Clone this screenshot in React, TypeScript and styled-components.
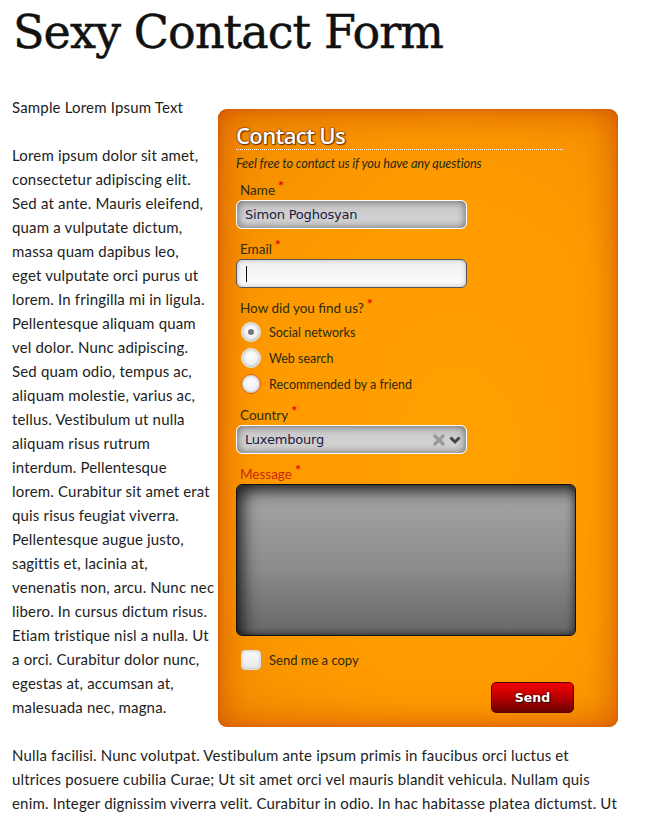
import React from "react";
import styled, { createGlobalStyle } from "styled-components";

const Global = createGlobalStyle`
  html, body { margin: 0; padding: 0; background: #fff; }
  body { font-family: Lato, "Noto Sans", sans-serif; color: #222; }
`;

const Page = styled.div`
  padding: 0 27px 0 12px;
  width: 606px;
`;

const Title = styled.h1`
  font-family: "DejaVu Serif", serif;
  font-weight: 400;
  font-size: 46px;
  line-height: 60px;
  margin: 2px 0 33px 1px;
  color: #111;
  letter-spacing: -0.9px;
  -webkit-text-stroke: 0.5px #111;
`;

const TopRow = styled.div`
  display: grid;
  grid-template-columns: 206px 400px;
  align-items: start;
`;

const Para = styled.p<{ $gap?: number }>`
  font-size: 15px;
  line-height: 24px;
  letter-spacing: 0.17px;
  margin: ${(p) => p.$gap ?? 0}px 0 0 0;
`;

const Line = styled.span`
  display: block;
  white-space: nowrap;
`;

const Panel = styled.form`
  margin-top: 14px;
  height: 618px;
  box-sizing: border-box;
  border-radius: 9px;
  background: radial-gradient(ellipse at 60% 55%, #ffa000 0%, #ff9b00 55%, #f08a00 100%);
  box-shadow: inset 0 0 36px rgba(205, 75, 0, 0.85), inset 0 0 6px rgba(200, 70, 0, 0.6);
  padding: 13px 0 0 18px;
  display: flex;
  flex-direction: column;
  font-family: Lato, "Noto Sans", sans-serif;
`;

const Header = styled.div`
  width: 327px;
  padding-bottom: 2px;
  background-image: repeating-linear-gradient(90deg, #fff 0 1px, transparent 1px 2px);
  background-size: 100% 1px;
  background-repeat: no-repeat;
  background-position: left bottom;
`;

const HeadTitle = styled.div`
  font-family: "Open Sans", sans-serif;
  font-weight: 600;
  font-size: 22px;
  line-height: 26px;
  color: #fff;
  letter-spacing: -0.6px;
  text-shadow: 0 0 2px rgba(80, 25, 0, 1), 0 0 1px rgba(60, 20, 0, 0.9), 1px 1px 1px rgba(60, 20, 0, 0.7);
`;

const Sub = styled.div`
  font-size: 12.8px;
  font-style: italic;
  line-height: 14px;
  margin-top: 6px;
  color: #2a2a10;
  letter-spacing: -0.15px;
`;

const Label = styled.label<{ $gap: number; $red?: boolean }>`
  display: block;
  font-size: 13.5px;
  line-height: 18px;
  padding-left: 4px;
  margin-top: ${(p) => p.$gap}px;
  color: ${(p) => (p.$red ? "#c62a0a" : "#2c2c10")};
`;

const Star = styled.sup`
  color: #e8001a;
  font-size: 14px;
  font-weight: 700;
  margin-left: 3px;
  vertical-align: 4px;
  line-height: 0;
`;

const GreyBox = styled.div`
  width: 231px;
  height: 29px;
  box-sizing: border-box;
  border: 1px solid #fff;
  border-radius: 6px;
  background: linear-gradient(#c8c8c8, #d6d6d6);
  box-shadow: inset 0 0 9px rgba(0, 0, 0, 0.55);
  display: flex;
  align-items: center;
  padding: 0 8px;
  margin-top: 1px;
  font-family: "DejaVu Sans", sans-serif;
  font-size: 13px;
  letter-spacing: -0.2px;
  color: #1a1a40;
`;

const WhiteBox = styled.div`
  width: 231px;
  height: 29px;
  box-sizing: border-box;
  border: 1px solid #555;
  border-radius: 6px;
  background: linear-gradient(#f0f0f0, #fbfbfb);
  box-shadow: inset 0 0 5px rgba(0, 0, 0, 0.25);
  display: flex;
  align-items: center;
  padding: 0 9px;
  margin-top: 1px;
`;

const Caret = styled.span`
  width: 1px;
  height: 16px;
  background: #111;
`;

const SelectText = styled.span`
  flex: 1;
`;

const RadioList = styled.div`
  margin-top: 2px;
  display: flex;
  flex-direction: column;
`;

const RadioRow = styled.div`
  height: 26px;
  display: flex;
  align-items: center;
  gap: 8px;
  padding-left: 5px;
  font-size: 12.5px;
  color: #2a2a10;
`;

const Radio = styled.span<{ $checked?: boolean; $focus?: boolean }>`
  width: 20px;
  height: 20px;
  box-sizing: border-box;
  border-radius: 50%;
  background: radial-gradient(circle at 50% 40%, #ffffff 0%, #eeeeee 60%, #d8d8d8 100%);
  border: ${(p) => (p.$focus ? "1.5px solid #ee5a10" : "1px solid #e6e6e6")};
  box-shadow: inset 0 0 3px rgba(0, 0, 0, 0.3);
  display: flex;
  align-items: center;
  justify-content: center;
  &::after {
    content: "";
    width: 6px;
    height: 6px;
    border-radius: 50%;
    background: ${(p) => (p.$checked ? "#777" : "transparent")};
  }
`;

const TextArea = styled.div`
  margin-top: 1px;
  width: 340px;
  height: 152px;
  box-sizing: border-box;
  border: 1px solid #111;
  border-radius: 6px;
  background: linear-gradient(#a2a2a2 10%, #8c8c8c 55%, #666 100%);
  box-shadow: inset 12px 12px 16px -6px rgba(0, 0, 0, 0.75), inset -4px 0 8px -2px rgba(0, 0, 0, 0.45),
    inset 0 -3px 6px -2px rgba(0, 0, 0, 0.4);
`;

const CheckRow = styled.div`
  margin-top: 14px;
  height: 20px;
  display: flex;
  align-items: center;
  gap: 8px;
  padding-left: 5px;
  font-size: 13px;
  color: #2a2a10;
`;

const Check = styled.span`
  width: 20px;
  height: 20px;
  box-sizing: border-box;
  border-radius: 4px;
  border: 1px solid #ddd;
  background: linear-gradient(#fafafa, #e9e9e9);
  box-shadow: inset 0 0 3px rgba(0, 0, 0, 0.2);
`;

const ButtonRow = styled.div`
  margin-top: 12px;
  width: 338px;
  display: flex;
  justify-content: flex-end;
`;

const SendButton = styled.button`
  width: 83px;
  height: 31px;
  border-radius: 5px;
  border: 1px solid #5a0000;
  background: linear-gradient(#f20000, #c00000 45%, #6a0000);
  color: #fff;
  font-family: "DejaVu Sans", sans-serif;
  font-weight: 700;
  font-size: 12.5px;
  text-shadow: 0 0 2px #300, 1px 1px 1px #300;
  padding: 0;
  cursor: pointer;
`;

const Icons = styled.span`
  display: flex;
  align-items: center;
  gap: 4px;
  margin-right: -3px;
`;

const ClearIcon = () => (
  <svg width="12" height="12" viewBox="0 0 12 12">
    <path d="M2 2 L10 10 M10 2 L2 10" stroke="#9a9a9a" strokeWidth="3.2" strokeLinecap="square" />
  </svg>
);

const ChevronIcon = () => (
  <svg width="12" height="10" viewBox="0 0 12 10">
    <path d="M1.5 2.5 L6 7 L10.5 2.5" stroke="#444" strokeWidth="3" fill="none" />
  </svg>
);

const leftLines = [
  "Lorem ipsum dolor sit amet,",
  "consectetur adipiscing elit.",
  "Sed at ante. Mauris eleifend,",
  "quam a vulputate dictum,",
  "massa quam dapibus leo,",
  "eget vulputate orci purus ut",
  "lorem. In fringilla mi in ligula.",
  "Pellentesque aliquam quam",
  "vel dolor. Nunc adipiscing.",
  "Sed quam odio, tempus ac,",
  "aliquam molestie, varius ac,",
  "tellus. Vestibulum ut nulla",
  "aliquam risus rutrum",
  "interdum. Pellentesque",
  "lorem. Curabitur sit amet erat",
  "quis risus feugiat viverra.",
  "Pellentesque augue justo,",
  "sagittis et, lacinia at,",
  "venenatis non, arcu. Nunc nec",
  "libero. In cursus dictum risus.",
  "Etiam tristique nisl a nulla. Ut",
  "a orci. Curabitur dolor nunc,",
  "egestas at, accumsan at,",
  "malesuada nec, magna.",
];

const bottomLines = [
  "Nulla facilisi. Nunc volutpat. Vestibulum ante ipsum primis in faucibus orci luctus et",
  "ultrices posuere cubilia Curae; Ut sit amet orci vel mauris blandit vehicula. Nullam quis",
  "enim. Integer dignissim viverra velit. Curabitur in odio. In hac habitasse platea dictumst. Ut",
];

export default function App() {
  return (
    <>
      <Global />
      <Page>
        <Title>Sexy Contact Form</Title>
        <TopRow>
          <div>
            <Para>Sample Lorem Ipsum Text</Para>
            <Para $gap={24}>
              {leftLines.map((l, i) => (
                <Line key={i}>{l}</Line>
              ))}
            </Para>
          </div>
          <Panel onSubmit={(e) => e.preventDefault()}>
            <Header>
              <HeadTitle>Contact Us</HeadTitle>
            </Header>
            <Sub>Feel free to contact us if you have any questions</Sub>

            <Label $gap={11}>
              Name<Star>*</Star>
            </Label>
            <GreyBox>Simon Poghosyan</GreyBox>

            <Label $gap={11}>
              Email<Star>*</Star>
            </Label>
            <WhiteBox>
              <Caret />
            </WhiteBox>

            <Label $gap={11}>
              How did you find us?<Star>*</Star>
            </Label>
            <RadioList>
              <RadioRow>
                <Radio $checked />
                Social networks
              </RadioRow>
              <RadioRow>
                <Radio />
                Web search
              </RadioRow>
              <RadioRow>
                <Radio $focus />
                Recommended by a friend
              </RadioRow>
            </RadioList>

            <Label $gap={9}>
              Country<Star>*</Star>
            </Label>
            <GreyBox>
              <SelectText>Luxembourg</SelectText>
              <Icons>
                <ClearIcon />
                <ChevronIcon />
              </Icons>
            </GreyBox>

            <Label $gap={11} $red>
              Message<Star>*</Star>
            </Label>
            <TextArea />

            <CheckRow>
              <Check />
              Send me a copy
            </CheckRow>

            <ButtonRow>
              <SendButton type="submit">Send</SendButton>
            </ButtonRow>
          </Panel>
        </TopRow>
        <Para $gap={16}>
          {bottomLines.map((l, i) => (
            <Line key={i}>{l}</Line>
          ))}
        </Para>
      </Page>
    </>
  );
}
